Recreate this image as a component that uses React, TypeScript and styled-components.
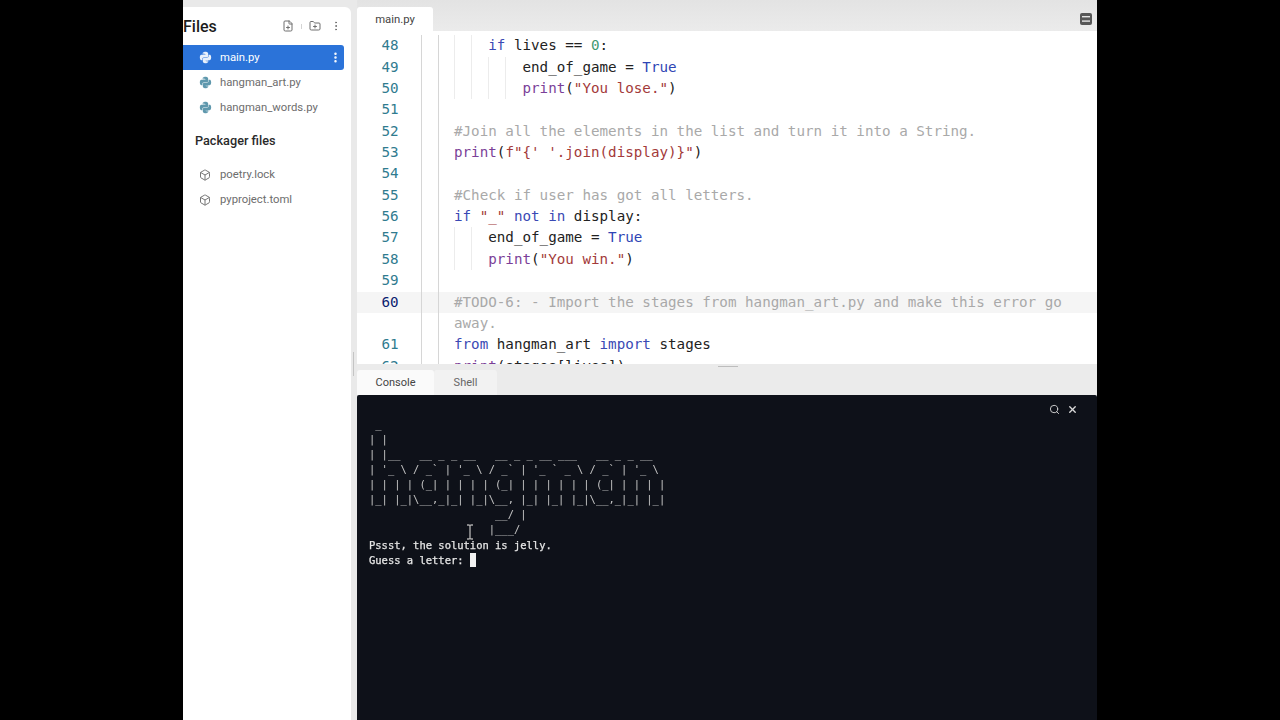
import React from "react";
import styled, { createGlobalStyle } from "styled-components";
import { FaPython } from "react-icons/fa";
import { Box, FilePlus, FolderPlus, MoreVertical, Search, X } from "lucide-react";

const Global = createGlobalStyle`
  html, body { margin: 0; padding: 0; background: #000; height: 100%; overflow: hidden; }
  #root { height: 100%; }
`;

const Stage = styled.div`
  position: relative;
  width: 914px;
  height: 720px;
  margin: 0 auto;
  display: grid;
  grid-template-columns: 168px 740px;
  column-gap: 6px;
  background: #e9e9e9;
  font-family: Roboto, "Noto Sans", sans-serif;
  overflow: hidden;
`;

const Sidebar = styled.aside`
  margin-top: 7px;
  background: #fff;
  border-top-right-radius: 6px;
  display: flex;
  flex-direction: column;
`;

const SideHeader = styled.div`
  height: 38px;
  flex: none;
  display: flex;
  align-items: center;
  color: #1c1c1c;
  font-size: 16px;
  font-weight: 500;
`;

const HeaderTitle = styled.span`
  flex: 1;
`;

const HeaderIcons = styled.div`
  display: flex;
  align-items: center;
  gap: 7px;
  padding-right: 9px;
  color: #6f6f6f;
  svg:last-child { margin-left: 2px; }
`;

const HeaderSep = styled.span`
  width: 1px;
  height: 5px;
  background: #d4d4d4;
`;

const FileRow = styled.div<{ $active?: boolean }>`
  height: 25px;
  width: 161px;
  flex: none;
  box-sizing: border-box;
  padding-left: 16px;
  display: flex;
  align-items: center;
  gap: 8px;
  font-size: 11.3px;
  color: ${(p) => (p.$active ? "#fff" : "#6d6d6d")};
  background: ${(p) => (p.$active ? "#2b73d9" : "transparent")};
  border-radius: ${(p) => (p.$active ? "0 3px 3px 0" : "0")};
  svg.py { color: ${(p) => (p.$active ? "#e8f0fb" : "#5f98ad")}; }
  svg.pkg { color: #777; margin: 0 1px 0 0; }
`;

const FileName = styled.span`
  flex: 1;
`;

const RowMenu = styled.span`
  display: flex;
  padding-right: 2px;
  color: #fff;
`;

const SectionTitle = styled.div`
  margin: 10px 0 10px 12px;
  height: 22px;
  line-height: 22px;
  font-size: 12.7px;
  font-weight: 500;
  color: #2a2a2a;
`;

const Main = styled.main`
  display: flex;
  flex-direction: column;
  min-width: 0;
`;

const TabStrip = styled.div`
  height: 31px;
  flex: none;
  display: flex;
  align-items: flex-end;
  justify-content: space-between;
  background: linear-gradient(#e3e3e3, #ebebeb);
`;

const EditorTab = styled.div`
  width: 76px;
  height: 24px;
  display: flex;
  align-items: center;
  justify-content: center;
  background: #fff;
  border-radius: 3px 3px 0 0;
  color: #444;
  font-size: 11.3px;
`;

const StripIcon = styled.svg`
  width: 12px;
  height: 12px;
  margin: 0 5px 6px 0;
`;

const Editor = styled.section`
  height: 333px;
  flex: none;
  background: #fff;
  overflow: hidden;
  padding-top: 4.2px;
  box-sizing: border-box;
  font-family: "DejaVu Sans Mono", monospace;
  font-size: 14.22px;
`;

const Row = styled.div<{ $current?: boolean }>`
  position: relative;
  height: 21.36px;
  line-height: 21.36px;
  white-space: pre;
  display: flex;
  background: ${(p) => (p.$current ? "#f5f5f5" : "transparent")};
`;

const LineNo = styled.span<{ $current?: boolean }>`
  width: 41.5px;
  text-align: right;
  flex: none;
  color: ${(p) => (p.$current ? "#0b216f" : "#2f7b8f")};
`;

const Code = styled.span`
  margin-left: 55.5px;
  color: #222;
`;

const Guide = styled.i<{ $x: number; $strong?: boolean }>`
  position: absolute;
  top: 0;
  bottom: 0;
  left: ${(p) => p.$x}px;
  width: 1px;
  background: ${(p) => (p.$strong ? "#d6d6d6" : "#ececec")};
`;

const Kw = styled.span` color: #3a49b4; `;
const Bool = styled.span` color: #2f45b5; `;
const Fn = styled.span` color: #7b3f98; `;
const Str = styled.span` color: #a33a3a; `;
const Num = styled.span` color: #3f9a72; `;
const Cmt = styled.span` color: #a9a9a9; `;

const VertHandle = styled.div`
  position: absolute;
  left: 170px;
  top: 352px;
  width: 1px;
  height: 24px;
  background: #c4c4c4;
`;

const HorzHandle = styled.div`
  position: absolute;
  left: 535px;
  top: 366px;
  width: 20px;
  height: 1px;
  background: #bdbdbd;
`;

const ConsoleTabs = styled.div`
  height: 31px;
  flex: none;
  display: flex;
  align-items: flex-end;
  background: #ebebeb;
`;

const ConsoleTab = styled.div<{ $active?: boolean }>`
  width: ${(p) => (p.$active ? "77px" : "63px")};
  height: 25px;
  display: flex;
  align-items: center;
  justify-content: center;
  font-size: 11px;
  color: ${(p) => (p.$active ? "#444" : "#666")};
  background: ${(p) => (p.$active ? "#fafafa" : "#f2f2f2")};
  border-radius: 3px 3px 0 0;
`;

const Console = styled.section`
  position: relative;
  flex: 1;
  background: #0e1119;
  border-radius: 2px 2px 0 0;
  padding: 22px 0 0 12px;
  font-family: "DejaVu Sans Mono", monospace;
  font-size: 10.47px;
  line-height: 15px;
`;

const Art = styled.pre`
  margin: 0 0 1px;
  font: inherit;
  color: #c4c4c4;
  will-change: transform;
`;

const Output = styled.pre`
  margin: 0;
  font: inherit;
  color: #e6e6e6;
  -webkit-text-stroke: 0.25px #e6e6e6;
  will-change: transform;
`;

const Caret = styled.span`
  display: inline-block;
  width: 6.3px;
  height: 14px;
  vertical-align: -3px;
  background: #f2f2f2;
`;

const ConsoleTools = styled.div`
  position: absolute;
  top: 9px;
  right: 19px;
  display: flex;
  align-items: center;
  gap: 7px;
  color: #d8d8d8;
`;

const IBeam = styled.svg`
  position: absolute;
  left: 109px;
  top: 129px;
  width: 8px;
  height: 16px;
`;

const ART = String.raw` _
| |
| |__   __ _ _ __   __ _ _ __ ___   __ _ _ __
| '_ \ / _${"`"} | '_ \ / _${"`"} | '_ ${"`"} _ \ / _${"`"} | '_ \
| | | | (_| | | | | (_| | | | | | | (_| | | | |
|_| |_|\__,_|_| |_|\__, |_| |_| |_|\__,_|_| |_|
                    __/ |
                   |___/`;

const guides = (n: number) =>
  Array.from({ length: n }, (_, i) => <Guide key={i} $x={97 + i * 17} />);

type Line = { n?: number; g?: number; current?: boolean; code?: React.ReactNode };

const lines: Line[] = [
  { n: 48, g: 2, code: <>{"    "}<Kw>if</Kw> lives == <Num>0</Num>:</> },
  { n: 49, g: 4, code: <>{"        "}end_of_game = <Bool>True</Bool></> },
  { n: 50, g: 4, code: <>{"        "}<Fn>print</Fn>(<Str>"You lose."</Str>)</> },
  { n: 51 },
  { n: 52, code: <Cmt>#Join all the elements in the list and turn it into a String.</Cmt> },
  { n: 53, code: <><Fn>print</Fn>(<Str>f"{"{"}' '.join(display){"}"}"</Str>)</> },
  { n: 54 },
  { n: 55, code: <Cmt>#Check if user has got all letters.</Cmt> },
  { n: 56, code: <><Kw>if</Kw> <Str>"_"</Str> <Kw>not</Kw> <Kw>in</Kw> display:</> },
  { n: 57, g: 2, code: <>{"    "}end_of_game = <Bool>True</Bool></> },
  { n: 58, g: 2, code: <>{"    "}<Fn>print</Fn>(<Str>"You win."</Str>)</> },
  { n: 59 },
  { n: 60, current: true, code: <Cmt>#TODO-6: - Import the stages from hangman_art.py and make this error go</Cmt> },
  { code: <Cmt>away.</Cmt> },
  { n: 61, code: <><Kw>from</Kw> hangman_art <Kw>import</Kw> stages</> },
  { n: 62, code: <><Fn>print</Fn>(stages[lives])</> },
];

const PyIcon = () => <FaPython className="py" size={13} />;

export default function App() {
  return (
    <Stage>
      <Global />
      <Sidebar>
        <SideHeader>
          <HeaderTitle>Files</HeaderTitle>
          <HeaderIcons>
            <FilePlus size={12} />
            <HeaderSep />
            <FolderPlus size={12} />
            <MoreVertical size={12} />
          </HeaderIcons>
        </SideHeader>
        <FileRow $active>
          <PyIcon />
          <FileName>main.py</FileName>
          <RowMenu><MoreVertical size={13} strokeWidth={2.6} /></RowMenu>
        </FileRow>
        <FileRow><PyIcon /><FileName>hangman_art.py</FileName></FileRow>
        <FileRow><PyIcon /><FileName>hangman_words.py</FileName></FileRow>
        <SectionTitle>Packager files</SectionTitle>
        <FileRow><Box className="pkg" size={12} /><FileName>poetry.lock</FileName></FileRow>
        <FileRow><Box className="pkg" size={12} /><FileName>pyproject.toml</FileName></FileRow>
      </Sidebar>
      <Main>
        <TabStrip>
          <EditorTab>main.py</EditorTab>
          <StripIcon viewBox="0 0 12 12">
            <rect width="12" height="12" rx="2" fill="#565656" />
            <rect x="2" y="3" width="8" height="1.4" fill="#e4e4e4" />
            <rect x="2" y="7.4" width="8" height="1.4" fill="#e4e4e4" />
          </StripIcon>
        </TabStrip>
        <Editor>
          {lines.map((l, i) => (
            <Row key={i} $current={l.current}>
              <LineNo $current={l.current}>{l.n ?? ""}</LineNo>
              <Code>{l.code}</Code>
              <Guide $x={64} $strong />
              <Guide $x={81} $strong />
              {guides(l.g ?? 0)}
            </Row>
          ))}
        </Editor>
        <ConsoleTabs>
          <ConsoleTab $active>Console</ConsoleTab>
          <ConsoleTab>Shell</ConsoleTab>
        </ConsoleTabs>
        <Console>
          <ConsoleTools>
            <Search size={11} strokeWidth={2} />
            <X size={11} strokeWidth={3} />
          </ConsoleTools>
          <Art>{ART}</Art>
          <Output>Pssst, the solution is jelly.{"\n"}Guess a letter: <Caret /></Output>
          <IBeam viewBox="0 0 8 16">
            <path d="M1 1h2l1 1 1-1h2M4 2v12M1 15h2l1-1 1 1h2" fill="none" stroke="#a8a8a8" strokeWidth="1.4" />
          </IBeam>
        </Console>
      </Main>
      <VertHandle />
      <HorzHandle />
    </Stage>
  );
}
